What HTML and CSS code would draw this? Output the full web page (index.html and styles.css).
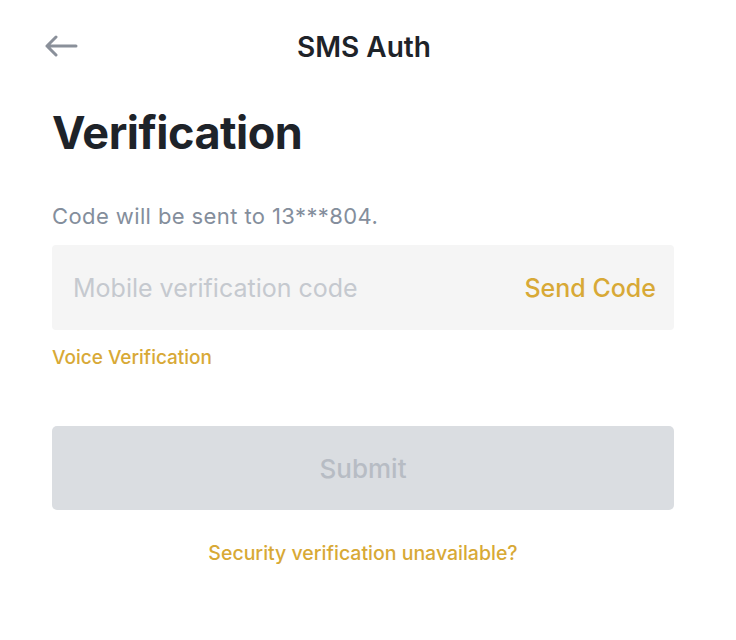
FILE: index.html
```html
<!DOCTYPE html>
<html>
<head>
<meta charset="utf-8">
<link rel="stylesheet" href="styles.css">
</head>
<body>
<div class="page">
  <header class="topbar">
    <span class="back">
      <svg width="34" height="22" viewBox="0 0 34 22" fill="none" stroke="#8A909A" stroke-width="3" stroke-linecap="round" stroke-linejoin="round"><path d="M32 11H3M12 2L3 11l9 9"/></svg>
    </span>
    <h1 class="title">SMS Auth</h1>
  </header>
  <main class="content">
    <h2 class="heading">Verification</h2>
    <p class="note">Code will be sent to 13***804.</p>
    <div class="field">
      <span class="placeholder">Mobile verification code</span>
      <span class="send">Send Code</span>
    </div>
    <a class="voice">Voice Verification</a>
    <div class="submit">Submit</div>
    <a class="help">Security verification unavailable?</a>
  </main>
</div>
</body>
</html>
```
FILE: styles.css
```css
* { box-sizing: border-box; }
html, body { margin: 0; padding: 0; background: #fff; }
body { font-family: "Inter", "Noto Sans", sans-serif; width: 736px; height: 640px; overflow: hidden; }
.page { padding: 0 62px 0 52px; }
.topbar { position: relative; height: 96px; display: flex; align-items: center; justify-content: center; }
.back { position: absolute; left: -8px; top: 35px; display: flex; }
.title { margin: 0; font-size: 28px; font-weight: 600; color: #1E2329; position: relative; top: -1px; left: 1px; }
.content { display: flex; flex-direction: column; }
.heading { margin: 7px 0 0 0; font-size: 45px; font-weight: 700; color: #1E2329; letter-spacing: -0.5px; line-height: 60px; }
.note { margin: 41px 0 0 0; font-size: 22px; color: #848E9C; line-height: 24px; letter-spacing: 0.4px; }
.field { margin-top: 17px; height: 85px; background: #F5F5F5; border-radius: 4px; display: flex; align-items: center; justify-content: space-between; padding: 0 18px 0 21px; }
.placeholder { font-size: 25px; color: #C5C9CF; font-weight: 400; }
.send { font-size: 25px; font-weight: 500; color: #D8A936; }
.voice { margin-top: 16px; font-size: 19px; font-weight: 500; color: #D8A936; line-height: 24px; }
.submit { margin-top: 56px; height: 84px; background: #DADDE1; border-radius: 5px; display: flex; align-items: center; justify-content: center; font-size: 26px; font-weight: 500; color: #B7BCC4; }
.help { margin-top: 31px; align-self: center; font-size: 19.5px; font-weight: 500; color: #D8A936; line-height: 24px; }
```
